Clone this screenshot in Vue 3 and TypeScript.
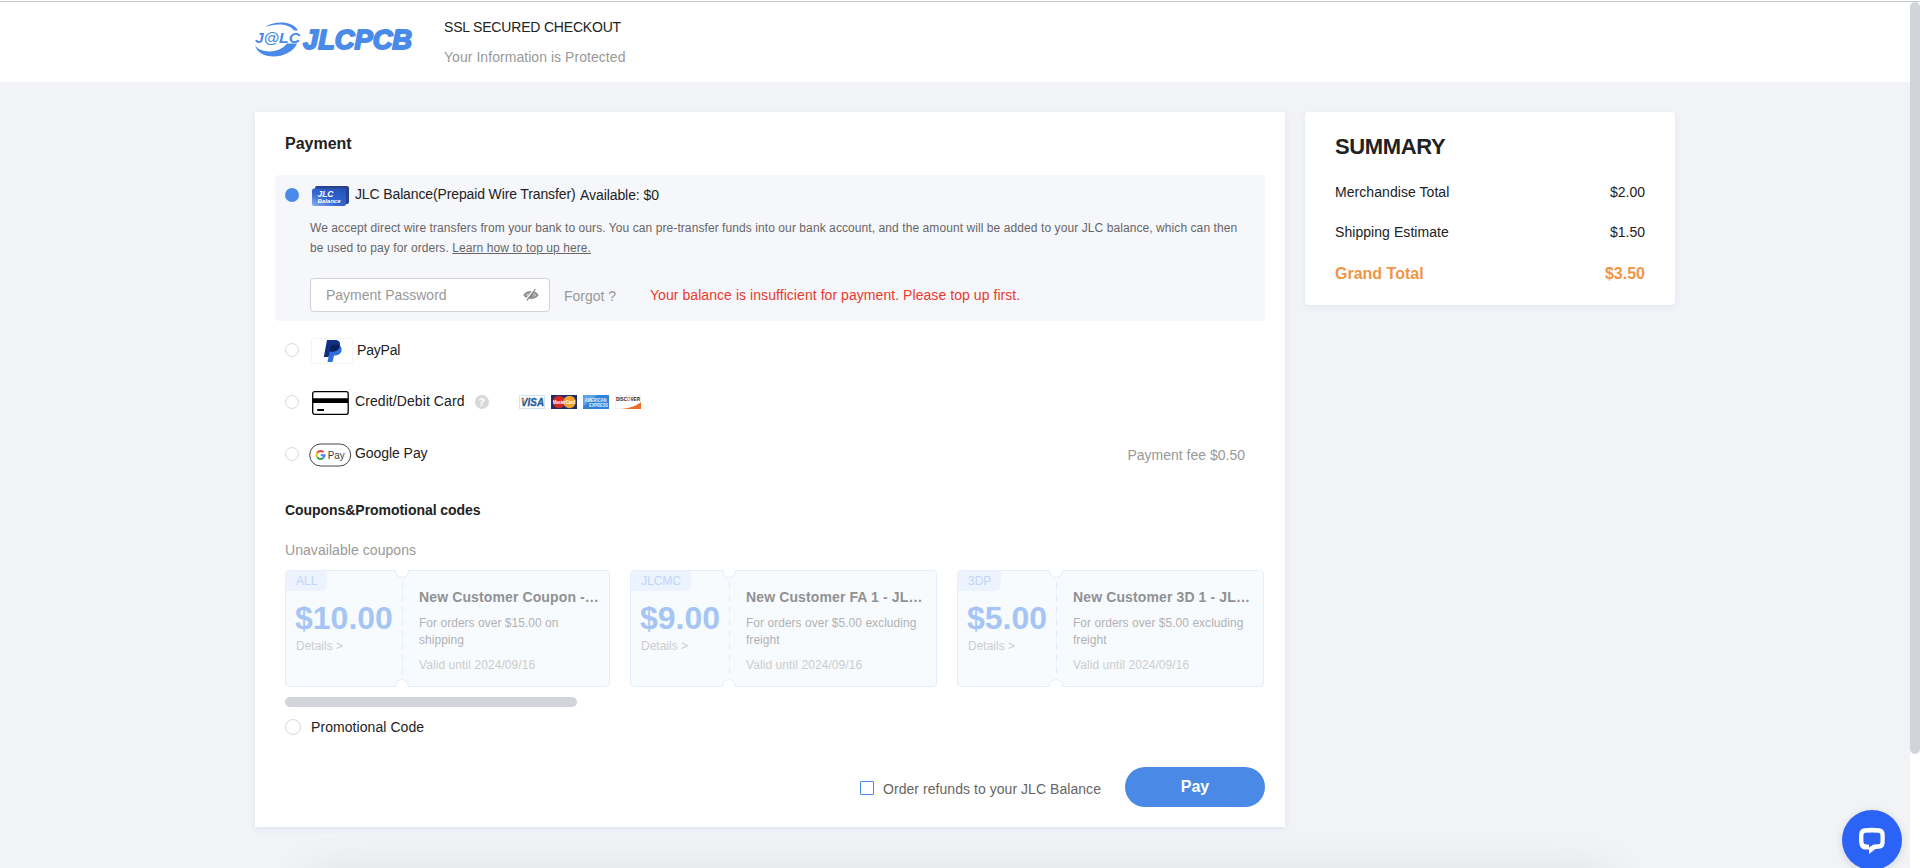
<script setup lang="ts">
interface Coupon {
  tag: string
  price: string
  title: string
  terms: string
  valid: string
  wide?: boolean
}

const coupons: Coupon[] = [
  { tag: 'ALL', price: '$10.00', title: 'New Customer Coupon -…', terms: 'For orders over $15.00 on shipping', valid: 'Valid until 2024/09/16', wide: true },
  { tag: 'JLCMC', price: '$9.00', title: 'New Customer FA 1 - JL…', terms: 'For orders over $5.00 excluding freight', valid: 'Valid until 2024/09/16' },
  { tag: '3DP', price: '$5.00', title: 'New Customer 3D 1 - JL…', terms: 'For orders over $5.00 excluding freight', valid: 'Valid until 2024/09/16' },
]

const totals = [
  { label: 'Merchandise Total', value: '$2.00' },
  { label: 'Shipping Estimate', value: '$1.50' },
]
</script>

<template>
  <div class="page">
    <header class="header">
      <svg class="logo" width="160" height="38" viewBox="0 0 160 38">
        <path d="M10 6C19-.5 38-.5 43 9.500L39 9.500C34 2.500 21 2 10 6Z" fill="#4a8ae8" />
        <path d="M0 24C5 33 25 32.500 32 22.500L42 22.500C36 38 4 41 0 24Z" fill="#4a8ae8" />
        <g fill="#4a8ae8" font-family="Liberation Sans, Arial, sans-serif" font-weight="700" font-style="italic">
          <text x="0" y="21.500" font-size="15.500" textLength="45" lengthAdjust="spacingAndGlyphs">J@LC</text>
          <text x="48" y="28" font-size="27.500" stroke="#4a8ae8" stroke-width="1.900" stroke-linejoin="round" textLength="109" lengthAdjust="spacingAndGlyphs">JLCPCB</text>
        </g>
      </svg>
      <div class="secure">
        <div class="secure-title">SSL SECURED CHECKOUT</div>
        <div class="secure-sub">Your Information is Protected</div>
      </div>
    </header>

    <main class="main">
      <section class="payment">
        <h2 class="pay-title">Payment</h2>

        <div class="balance">
          <div class="balance-head">
            <span class="radio on"></span>
            <svg class="jlc" width="38" height="22" viewBox="0 0 38 22">
              <defs>
                <linearGradient id="jb" x1="1" y1="0" x2="0" y2="1">
                  <stop offset="0" stop-color="#2450b4" />
                  <stop offset=".6" stop-color="#3568d4" />
                  <stop offset="1" stop-color="#8bb0f2" />
                </linearGradient>
              </defs>
              <rect x="3" y="1" width="34" height="18" rx="2" fill="#27458f" />
              <rect x="0" y="3.5" width="34" height="17.5" rx="2" fill="url(#jb)" />
              <g fill="#fff" font-family="Liberation Sans, Arial, sans-serif" font-weight="700" font-style="italic">
                <text x="5.5" y="12" font-size="8.5" textLength="16">JLC</text>
                <text x="5.5" y="18.3" font-size="6" textLength="23">Balance</text>
              </g>
            </svg>
            <span class="label-a">JLC Balance(Prepaid Wire Transfer)</span>
            <span class="label-b">Available: $0</span>
          </div>
          <p class="desc">
            <span class="line">We accept direct wire transfers from your bank to ours. You can pre-transfer funds into our bank account, and the amount will be added to your JLC balance, which can then</span>
            <span class="line">be used to pay for orders. <a class="learn">Learn how to top up here.</a></span>
          </p>
          <div class="pwd-row">
            <div class="pwd">
              <span class="placeholder">Payment Password</span>
              <svg width="16" height="14" viewBox="0 0 16 14">
                <path d="M1.3 7C4.2 2.8 11.8 2.8 14.7 7C11.8 11.2 4.2 11.2 1.3 7Z" fill="#bbb" stroke="#8f8f8f" stroke-width="1.6" />
                <circle cx="8" cy="7" r="2.6" fill="#8f8f8f" />
                <path d="M3 11.600L11.400 .8" stroke="#fff" stroke-width="1.4" />
                <path d="M3.8 12.6L12.4 1.2" stroke="#8f8f8f" stroke-width="1.2" />
              </svg>
            </div>
            <span class="forgot">Forgot ?</span>
            <span class="error">Your balance is insufficient for payment. Please top up first.</span>
          </div>
        </div>

        <div class="method">
          <span class="radio"></span>
          <span class="icon">
            <svg class="paypal" width="42" height="26" viewBox="0 0 42 26">
              <rect x=".5" y=".5" width="41" height="25" rx="2.5" fill="#fff" stroke="#f3f3f5" />
              <path d="M19.5 7H28C31 9 31.500 12.500 29.500 15C28 17 25.500 17.500 23 17.500L21.500 24H16.500L17.500 19Z" fill="#2f6fdc" />
              <path d="M16 2H24C28 2 29.800 4.500 28.800 8C28 12 25 13.500 21 13.500H19L17.500 19H12.800Z" fill="#113080" />
              <path d="M20 7.500C23 6.500 27 6.500 28.800 8C28 12 25 13.500 21 13.500H18.800Z" fill="#091f5c" />
            </svg>
          </span>
          <span class="name pp">PayPal</span>
        </div>

        <div class="method">
          <span class="radio"></span>
          <span class="icon">
            <svg class="credit" width="38" height="25" viewBox="0 0 38 25">
              <rect x=".7" y=".7" width="35.500" height="22.600" rx="2" fill="#fff" stroke="#000" stroke-width="1.300" />
              <path d="M1 7.200H36V12H1ZM5.200 18H12V20H5.200Z" />
            </svg>
          </span>
          <span class="name cc">Credit/Debit Card</span>
          <span class="help">?</span>
          <svg class="brands" width="122" height="14" viewBox="0 0 122 14" font-family="Liberation Sans, Arial, sans-serif" font-weight="700">
            <rect x=".5" y=".5" width="25" height="13" fill="#fff" stroke="#d5e3ec" />
            <text x="2" y="11" font-size="10.500" font-style="italic" fill="#1e5a9c" stroke="#1e5a9c" stroke-width=".3" textLength="23" lengthAdjust="spacingAndGlyphs">VISA</text>
            <path d="M1.500 3.500H5L6 8Z" fill="#e9a23b" />
            <g transform="translate(32 0)">
              <rect width="26" height="14" fill="#1f2d6b" />
              <circle cx="8" cy="7" r="6.200" fill="#cf2a26" />
              <circle cx="18.500" cy="7" r="6.200" fill="#f0a12f" />
              <text x="2" y="9" font-size="5.500" fill="#fff" textLength="22" lengthAdjust="spacingAndGlyphs">MasterCard</text>
            </g>
            <g transform="translate(64 0)">
              <rect width="26" height="14" fill="#2f83d8" />
              <path d="M0 0H14L0 12Z" fill="#5aa5e8" />
              <text x="1.500" y="6.500" font-size="5" fill="#e3f2ff" textLength="22" lengthAdjust="spacingAndGlyphs">AMERICAN</text>
              <text x="6" y="11.500" font-size="5" fill="#e3f2ff" textLength="19" lengthAdjust="spacingAndGlyphs">EXPRESS</text>
            </g>
            <g transform="translate(96 0)">
              <rect x=".5" y=".5" width="25" height="13" fill="#fff" stroke="#f1f1f1" />
              <path d="M7 14C15 13 22 10.500 26 7V14Z" fill="#e8702c" />
              <text x="1" y="6" font-size="5.500" fill="#222" textLength="24" lengthAdjust="spacingAndGlyphs">DISC<tspan fill="#e8702c">O</tspan>VER</text>
            </g>
          </svg>
        </div>

        <div class="method">
          <span class="radio"></span>
          <span class="icon">
            <svg class="gpay" width="43" height="24" viewBox="0 0 43 24">
              <rect x=".7" y="1" width="41" height="22" rx="11" fill="#fff" stroke="#444" stroke-width="1" />
              <g fill="none" stroke-width="2">
                <path d="M14.500 9.200A4 4 0 0 0 8.200 9.800" stroke="#ea4335" />
                <path d="M8.200 9.800A4 4 0 0 0 8.200 14.200" stroke="#fbbc04" />
                <path d="M8.200 14.200A4 4 0 0 0 14 15.100" stroke="#34a853" />
                <path d="M14 15.100A4 4 0 0 0 15.600 12.200H11.700" stroke="#4285f4" />
              </g>
              <text x="18.700" y="16" font-family="Liberation Sans, Arial, sans-serif" font-size="11" fill="#3c4043" textLength="17" lengthAdjust="spacingAndGlyphs">Pay</text>
            </svg>
          </span>
          <span class="name gp">Google Pay</span>
          <span class="fee">Payment fee $0.50</span>
        </div>

        <h3 class="codes-title">Coupons&amp;Promotional codes</h3>
        <div class="unavailable">Unavailable coupons</div>

        <div class="coupons">
          <article v-for="c in coupons" :key="c.tag" class="coupon" :class="{ wide: c.wide }">
            <div class="left">
              <span class="tag">{{ c.tag }}</span>
              <div class="price">{{ c.price }}</div>
              <div class="details">Details &gt;</div>
            </div>
            <div class="right">
              <div class="c-title">{{ c.title }}</div>
              <div class="terms">{{ c.terms }}</div>
              <div class="valid">{{ c.valid }}</div>
            </div>
            <i class="notch top"></i>
            <i class="notch bottom"></i>
          </article>
        </div>
        <div class="hbar"></div>

        <div class="promo">
          <span class="radio big"></span>
          <span class="promo-label">Promotional Code</span>
        </div>

        <div class="footer">
          <span class="check"></span>
          <span class="refund">Order refunds to your JLC Balance</span>
          <button class="pay">Pay</button>
        </div>
      </section>

      <aside class="summary">
        <h2 class="sum-title">SUMMARY</h2>
        <div v-for="t in totals" :key="t.label" class="sum-row">
          <span class="sum-label">{{ t.label }}</span><span>{{ t.value }}</span>
        </div>
        <div class="sum-row grand"><span>Grand Total</span><span>$3.50</span></div>
      </aside>
    </main>

    <div class="under"></div>
    <div class="track"><div class="thumb"></div></div>
    <div class="chat">
      <svg width="30" height="30" viewBox="0 0 30 30">
        <path fill="#fff" fill-rule="evenodd" d="M7 2.300Q15 1.300 23 2.300Q28 2.800 28.700 7.500Q29.300 13 28.700 18.500Q28 23.500 23 24.200L18.800 24.600L12 30V25H7.500Q2.300 24.200 1.500 18.500Q.8 13 1.500 7.500Q2.200 2.800 7 2.300ZM8 7Q6.300 7.200 6.100 8.500Q5.600 13 6.100 17.800Q6.300 19.300 8 19.500L12 20V22.800L16.800 19.800L22.300 19.500Q23.900 19.300 24.100 17.800Q24.600 13 24.100 8.500Q23.900 7.200 22.300 7Q15 6.300 8 7Z" transform="translate(.9 1.200) scale(.93)" />
      </svg>
    </div>
  </div>
</template>

<style>
body {
  overflow: hidden;
}
</style>

<style scoped>
* {
  box-sizing: border-box;
}
.page {
  position: relative;
  width: 1920px;
  height: 868px;
  overflow: hidden;
  background: #f1f3f7;
  color: #222;
  font: 14px/20px "Liberation Sans", Arial, sans-serif;
  white-space: nowrap;
}
h2, h3, p {
  margin: 0;
}
.header {
  display: flex;
  height: 82px;
  padding-left: 255px;
  background: #fff;
  box-shadow: inset 0 1px #fff, inset 0 2px #c8cccd;
}
.logo {
  margin-top: 21px;
  overflow: visible;
}
.secure {
  margin-left: 29px;
  padding-top: 17px;
}
.secure-title {
  letter-spacing: -.19px;
}
.secure-sub {
  margin-top: 10px;
  color: #999;
  letter-spacing: .05px;
}
.main {
  display: flex;
  align-items: flex-start;
  gap: 20px;
  padding: 30px 0 0 255px;
}
.payment {
  width: 1030px;
  height: 715px;
  padding: 21px 20px 0;
  background: #fff;
  box-shadow: 0 2px 6px rgba(60, 80, 140, .09);
}
.pay-title {
  margin-left: 10px;
  font-size: 16px;
  line-height: 22px;
}
.balance {
  height: 146px;
  margin-top: 20px;
  padding: 10px 0 0 10px;
  border-radius: 4px;
  background: #f6f7fb;
}
.balance-head {
  display: flex;
  height: 21px;
}
.radio {
  flex: none;
  width: 14px;
  height: 14px;
  border: 1px solid #d9d9d9;
  border-radius: 50%;
  background: #fff;
}
.radio.on {
  margin-top: 3px;
  border: 0;
  background: #4a8ae8;
}
.jlc {
  margin-left: 13px;
}
.label-a {
  width: 225px;
  margin-left: 5px;
  line-height: 18px;
  letter-spacing: -.13px;
}
.label-b {
  line-height: 20px;
  letter-spacing: -.08px;
}
.desc {
  margin: 12px 0 0 25px;
  color: #666;
  font-size: 12px;
  letter-spacing: .08px;
}
.line {
  display: block;
}
.learn {
  text-decoration: underline;
}
.pwd-row {
  display: flex;
  margin: 20px 0 0 25px;
}
.pwd {
  display: flex;
  align-items: center;
  justify-content: space-between;
  width: 240px;
  height: 34px;
  padding: 0 10px 0 15px;
  border: 1px solid #d2d2d4;
  border-radius: 4px;
  background: #fff;
  color: #999;
}
.forgot {
  width: 86px;
  margin: 8px 0 0 14px;
  color: #999;
}
.error {
  margin-top: 7px;
  color: #e83a2b;
  letter-spacing: .06px;
}
.method {
  display: flex;
  align-items: center;
  height: 52px;
  padding: 0 20px 0 10px;
}
.balance + .method {
  margin-top: 3px;
}
.icon {
  display: flex;
  align-items: center;
  width: 56px;
  padding-left: 12px;
}
.paypal, .credit {
  flex: none;
  margin-top: 2px;
}
.gpay {
  flex: none;
  margin: 2px 0 0 -2px;
}
.credit {
  margin-left: 1px;
}
.name {
  margin-top: -2px;
}
.pp {
  margin: 0 0 0 2px;
  letter-spacing: -.2px;
}
.cc {
  letter-spacing: .08px;
}
.gp {
  letter-spacing: -.06px;
}
.help {
  width: 14px;
  height: 14px;
  margin: 0 30px 0 10px;
  border-radius: 50%;
  background: #d8d8d8;
  color: #fff;
  font: bold 11px/14px "Liberation Sans", Arial, sans-serif;
  text-align: center;
}
.fee {
  margin: 2px 0 0 auto;
  color: #999;
}
.codes-title {
  margin: 20px 0 0 10px;
  font-size: 14px;
  letter-spacing: -.05px;
}
.unavailable {
  margin: 20px 0 0 10px;
  color: #999;
  letter-spacing: .06px;
}
.coupons {
  display: flex;
  gap: 20px;
  margin: 10px 0 0 10px;
}
.coupon {
  position: relative;
  display: flex;
  width: 307px;
  height: 117px;
  border: 1px solid #e3eefd;
  border-radius: 4px;
  background: #f8fbfe;
}
.coupon.wide {
  width: 325px;
}
.left {
  width: 98px;
  padding-left: 10px;
}
.wide .left {
  width: 116px;
}
.tag {
  display: block;
  width: fit-content;
  height: 20px;
  margin-left: -10px;
  padding: 0 10px;
  border-radius: 3px 0 6px 0;
  background: #ecf3fe;
  color: #bdd6fa;
  font-size: 12px;
}
.price {
  margin: 9px 0 0 -1px;
  color: #a5c5f4;
  font-size: 32px;
  font-weight: 700;
  line-height: 36px;
}
.details {
  color: #ccc;
  font-size: 12px;
}
.right {
  margin-top: 11px;
  height: 92px;
  padding: 5px 0 0 17px;
  background: repeating-linear-gradient(to bottom, #e3eefd 0 8px, transparent 8px 12px) 0 0 / 1px 100% no-repeat;
}
.c-title {
  color: #909192;
  font-weight: 700;
  letter-spacing: .12px;
}
.terms {
  width: 180px;
  margin-top: 8px;
  color: #b2b2b2;
  font-size: 12px;
  line-height: 17px;
  letter-spacing: .03px;
  white-space: normal;
}
.valid {
  margin-top: 6px;
  color: #ccc;
  font-size: 12px;
  letter-spacing: .08px;
}
.notch {
  position: absolute;
  left: 91px;
  width: 14px;
  height: 8px;
  border: 1px solid #e3eefd;
  background: #fff;
}
.wide .notch {
  left: 109px;
}
.notch.top {
  top: -1px;
  border-top: 0;
  border-radius: 0 0 7px 7px;
}
.notch.bottom {
  bottom: -1px;
  border-bottom: 0;
  border-radius: 7px 7px 0 0;
}
.hbar {
  width: 292px;
  height: 10px;
  margin: 10px 0 0 10px;
  border-radius: 5px;
  background: #d1d4d9;
}
.promo {
  display: flex;
  align-items: center;
  gap: 10px;
  margin: 10px 0 0 10px;
}
.promo-label {
  letter-spacing: .07px;
}
.radio.big {
  width: 16px;
  height: 16px;
}
.footer {
  display: flex;
  align-items: center;
  justify-content: flex-end;
  height: 40px;
  margin-top: 30px;
}
.check {
  width: 14px;
  height: 14px;
  margin: 2px 9px 0 0;
  border: 1px solid #4a8ae8;
  border-radius: 1px;
}
.refund {
  margin: 4px 24px 0 0;
  color: #666;
  letter-spacing: .05px;
}
.pay {
  width: 140px;
  height: 40px;
  padding: 0;
  border: 0;
  border-radius: 20px;
  background: #4a8ae6;
  color: #fff;
  font: bold 16px/40px "Liberation Sans", Arial, sans-serif;
}
.summary {
  width: 370px;
  height: 193px;
  padding: 21px 30px 0;
  border-radius: 4px;
  background: #fff;
  box-shadow: 0 2px 6px rgba(60, 80, 140, .07);
}
.sum-title {
  font-size: 22px;
  line-height: 28px;
  letter-spacing: -.35px;
}
.sum-row {
  display: flex;
  justify-content: space-between;
  height: 20px;
  margin-top: 20px;
}
.sum-label {
  letter-spacing: .06px;
}
.sum-title + .sum-row {
  margin-top: 21px;
}
.sum-row.grand {
  margin-top: 22px;
  color: #f19446;
  font-size: 16px;
  font-weight: 700;
}
.under {
  position: absolute;
  top: 878px;
  left: 310px;
  width: 1300px;
  height: 60px;
  box-shadow: 0 0 50px rgba(0, 0, 0, .11);
}
.track {
  position: absolute;
  top: 2px;
  right: 0;
  width: 10px;
  height: 866px;
  background: #fff;
}
.thumb {
  height: 752px;
  border-radius: 5px;
  background: #d1d4d9;
}
.chat {
  position: absolute;
  top: 810px;
  left: 1842px;
  width: 60px;
  height: 60px;
  padding: 15px;
  border-radius: 50%;
  background: #2b63f6;
  box-shadow: 0 2px 10px rgba(0, 0, 0, .12);
}
</style>
